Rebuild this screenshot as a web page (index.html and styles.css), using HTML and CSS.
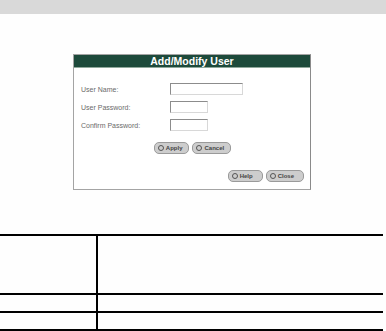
FILE: index.html
```html
<!DOCTYPE html>
<html lang="en">
<head>
    <meta charset="UTF-8">
    <title>Add/Modify User</title>
    <link rel="stylesheet" href="styles.css">
</head>
<body>
    <div class="topbar"></div>

    <div class="stage">
        <div class="dialog">
            <div class="dialog-head">Add/Modify User</div>
            <div class="dialog-body">
                <div class="field">
                    <label>User Name:</label>
                    <span class="input wide"></span>
                </div>
                <div class="field">
                    <label>User Password:</label>
                    <span class="input"></span>
                </div>
                <div class="field">
                    <label>Confirm Password:</label>
                    <span class="input"></span>
                </div>

                <div class="actions">
                    <span class="btn"><i class="dot"></i>Apply</span>
                    <span class="btn"><i class="dot"></i>Cancel</span>
                </div>

                <div class="actions right">
                    <span class="btn"><i class="dot"></i>Help</span>
                    <span class="btn"><i class="dot"></i>Close</span>
                </div>
            </div>
        </div>
    </div>

    <table class="params">
        <tr class="tall"><td class="key"></td><td></td></tr>
        <tr><td class="key"></td><td></td></tr>
        <tr><td class="key"></td><td></td></tr>
    </table>
</body>
</html>
```

FILE: styles.css
```css
body {
    margin: 0;
    font-family: "Liberation Sans", Arial, sans-serif;
    background: #fefefe;
}
.topbar {
    height: 14px;
    background: #d9d9d9;
}
.stage {
    padding: 40px 0 0 73px;
}
.dialog {
    width: 236px;
    height: 134px;
    border: 1px solid #a4a4a4;
    border-right-color: #8a8a8a;
    background: #fff;
}
.dialog-head {
    height: 12px;
    line-height: 12px;
    background: #1d4a3b;
    border-bottom: 1px solid #8fa89b;
    color: #fff;
    font-size: 10.5px;
    font-weight: bold;
    text-align: center;
}
.dialog-body {
    padding: 12px 6px 0 7px;
}
.field {
    display: flex;
    align-items: center;
    height: 18px;
}
.field label {
    width: 89px;
    font-size: 7px;
    color: #6a6a6a;
}
.input {
    width: 36px;
    height: 10px;
    border: 1px solid #d8d8d8;
    border-top-color: #8c8c8c;
    border-left-color: #8c8c8c;
}
.input.wide {
    width: 71px;
}
.actions {
    display: flex;
    justify-content: center;
    gap: 3px;
    margin-top: 8px;
}
.actions.right {
    justify-content: flex-end;
    margin-top: 16px;
}
.btn {
    display: flex;
    align-items: center;
    gap: 2px;
    height: 10px;
    padding: 0 6px 0 3px;
    border-radius: 5px;
    background: #cdcdcd;
    border: 1px solid #9a9a9a;
    font-size: 6px;
    font-weight: bold;
    color: #444;
}
.right .btn {
    padding-right: 9px;
}
.dot {
    width: 4px;
    height: 4px;
    border: 1px solid #555;
    border-radius: 50%;
}
.params {
    margin-top: 44px;
    width: 383px;
    border-collapse: collapse;
}
.params td {
    height: 16px;
    padding: 0;
    border-top: 2px solid #000;
    border-bottom: 2px solid #000;
}
.params .tall td {
    height: 57px;
}
.params .key {
    width: 96px;
    border-right: 2px solid #000;
}
```
